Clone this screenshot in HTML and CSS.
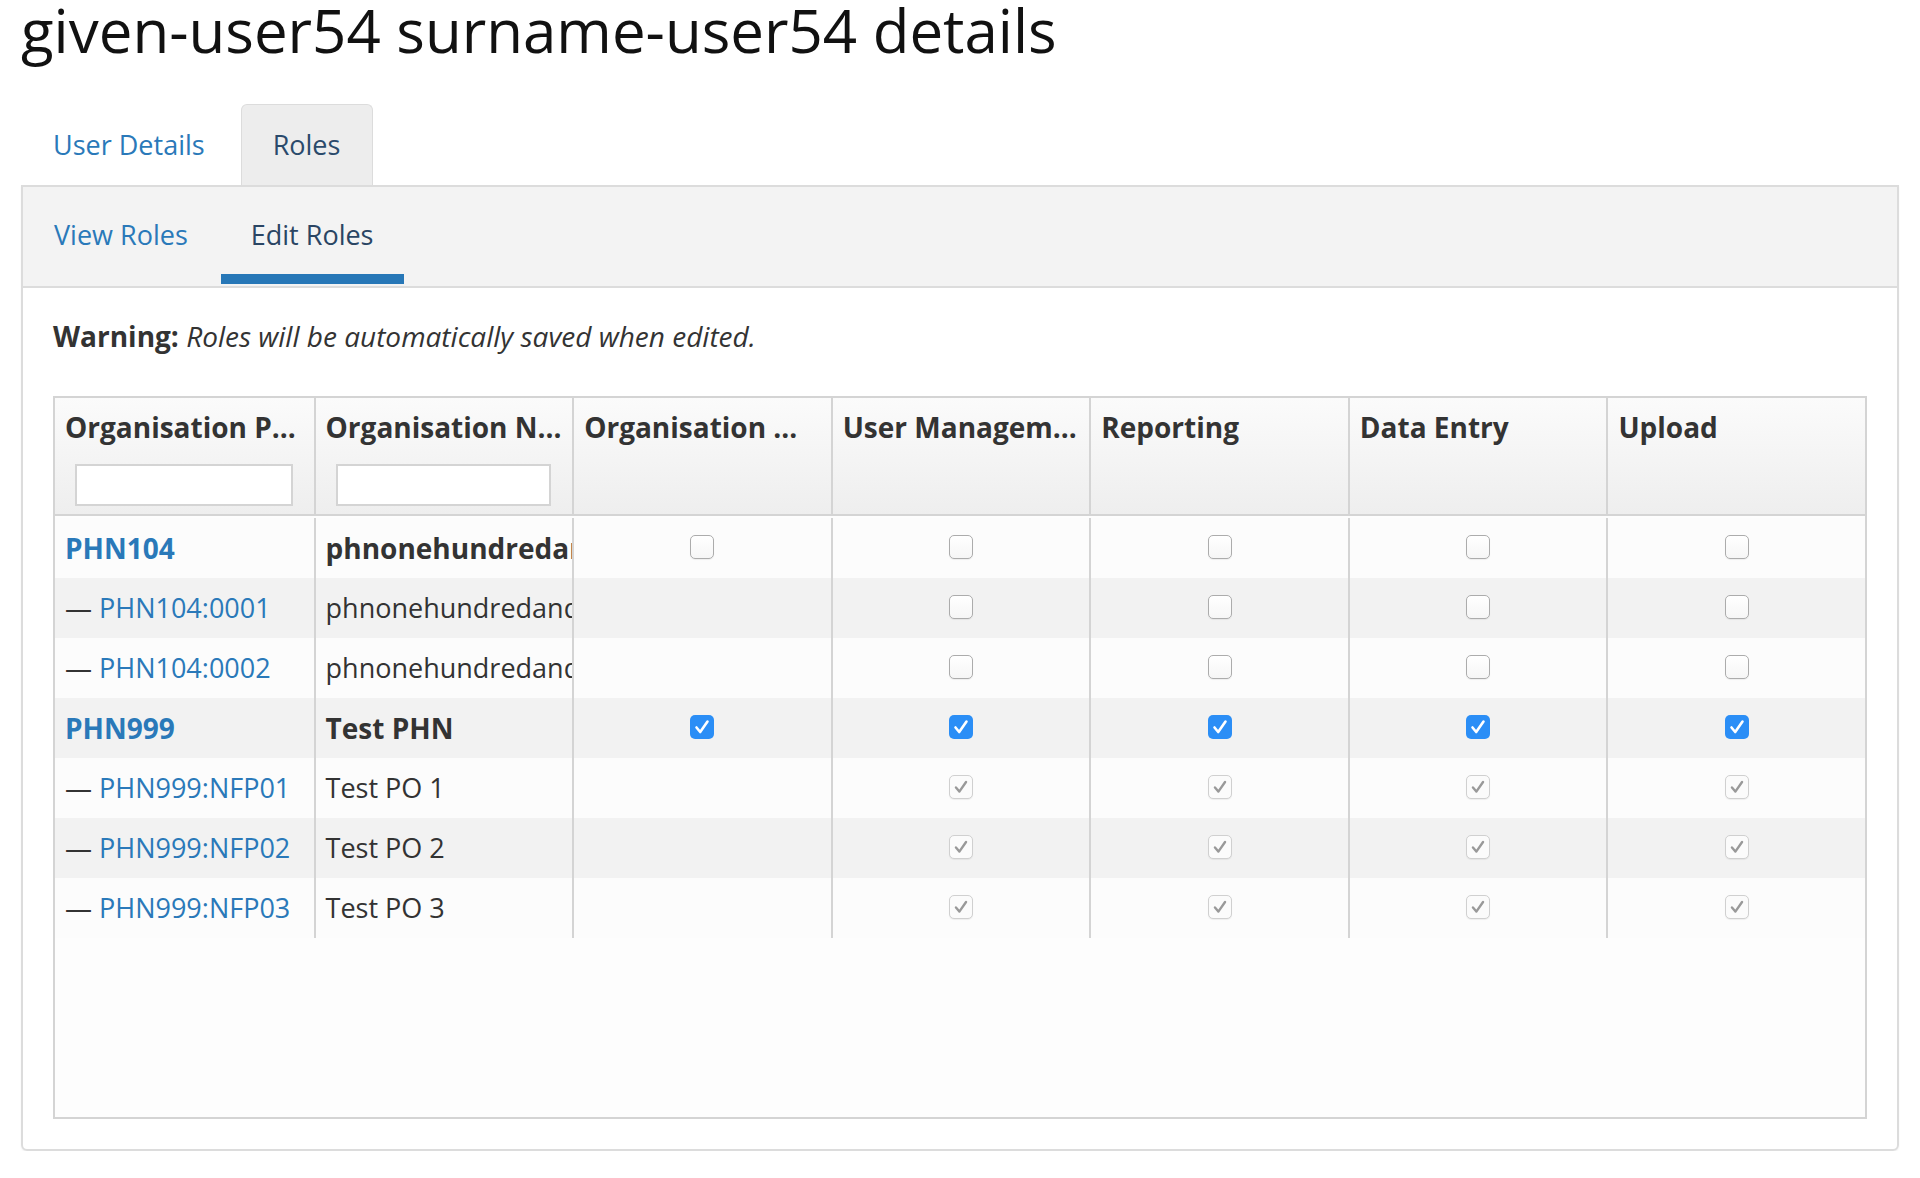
FILE: index.html
```html
<!DOCTYPE html>
<html lang="en">
<head>
<meta charset="utf-8">
<title>given-user54 surname-user54 details</title>
<link rel="stylesheet" href="styles.css">
</head>
<body>
<h1 class="title">given-user54 surname-user54 details</h1>
<nav class="tabs">
  <a class="tab">User Details</a>
  <a class="tab tab-active">Roles</a>
</nav>
<section class="panel">
  <nav class="subtabs">
    <a class="subtab">View Roles</a>
    <a class="subtab subtab-active">Edit Roles</a>
  </nav>
  <div class="content">
    <p class="warning"><strong>Warning:</strong> <em>Roles will be automatically saved when edited.</em></p>
    <div class="grid">
      <div class="grid-head">
        <div class="hcell"><div class="htext">Organisation P...</div><input class="filter" type="text"></div>
        <div class="hcell"><div class="htext">Organisation N...</div><input class="filter" type="text"></div>
        <div class="hcell"><div class="htext">Organisation ...</div></div>
        <div class="hcell"><div class="htext">User Managem...</div></div>
        <div class="hcell"><div class="htext">Reporting</div></div>
        <div class="hcell"><div class="htext">Data Entry</div></div>
        <div class="hcell"><div class="htext">Upload</div></div>
      </div>
      <div class="grid-body">
        <div class="row">
          <div class="cell"><a class="link strong">PHN104</a></div>
          <div class="cell strong">phnonehundredandfour</div>
          <div class="cell check-cell"><span class="cb"></span></div>
          <div class="cell check-cell"><span class="cb"></span></div>
          <div class="cell check-cell"><span class="cb"></span></div>
          <div class="cell check-cell"><span class="cb"></span></div>
          <div class="cell check-cell"><span class="cb"></span></div>
        </div>
        <div class="row">
          <div class="cell"><span class="dash">—</span> <a class="link">PHN104:0001</a></div>
          <div class="cell">phnonehundredandfour</div>
          <div class="cell check-cell"></div>
          <div class="cell check-cell"><span class="cb"></span></div>
          <div class="cell check-cell"><span class="cb"></span></div>
          <div class="cell check-cell"><span class="cb"></span></div>
          <div class="cell check-cell"><span class="cb"></span></div>
        </div>
        <div class="row">
          <div class="cell"><span class="dash">—</span> <a class="link">PHN104:0002</a></div>
          <div class="cell">phnonehundredandfour</div>
          <div class="cell check-cell"></div>
          <div class="cell check-cell"><span class="cb"></span></div>
          <div class="cell check-cell"><span class="cb"></span></div>
          <div class="cell check-cell"><span class="cb"></span></div>
          <div class="cell check-cell"><span class="cb"></span></div>
        </div>
        <div class="row">
          <div class="cell"><a class="link strong">PHN999</a></div>
          <div class="cell strong">Test PHN</div>
          <div class="cell check-cell"><span class="cb cb-on"><svg viewBox="0 0 24 24"><path d="M6.5 12.5 L10.2 17 L17.5 6.5"/></svg></span></div>
          <div class="cell check-cell"><span class="cb cb-on"><svg viewBox="0 0 24 24"><path d="M6.5 12.5 L10.2 17 L17.5 6.5"/></svg></span></div>
          <div class="cell check-cell"><span class="cb cb-on"><svg viewBox="0 0 24 24"><path d="M6.5 12.5 L10.2 17 L17.5 6.5"/></svg></span></div>
          <div class="cell check-cell"><span class="cb cb-on"><svg viewBox="0 0 24 24"><path d="M6.5 12.5 L10.2 17 L17.5 6.5"/></svg></span></div>
          <div class="cell check-cell"><span class="cb cb-on"><svg viewBox="0 0 24 24"><path d="M6.5 12.5 L10.2 17 L17.5 6.5"/></svg></span></div>
        </div>
        <div class="row">
          <div class="cell"><span class="dash">—</span> <a class="link">PHN999:NFP01</a></div>
          <div class="cell">Test PO 1</div>
          <div class="cell check-cell"></div>
          <div class="cell check-cell"><span class="cb cb-dis"><svg viewBox="0 0 24 24"><path d="M6.5 12.5 L10.2 17 L17.5 6.5"/></svg></span></div>
          <div class="cell check-cell"><span class="cb cb-dis"><svg viewBox="0 0 24 24"><path d="M6.5 12.5 L10.2 17 L17.5 6.5"/></svg></span></div>
          <div class="cell check-cell"><span class="cb cb-dis"><svg viewBox="0 0 24 24"><path d="M6.5 12.5 L10.2 17 L17.5 6.5"/></svg></span></div>
          <div class="cell check-cell"><span class="cb cb-dis"><svg viewBox="0 0 24 24"><path d="M6.5 12.5 L10.2 17 L17.5 6.5"/></svg></span></div>
        </div>
        <div class="row">
          <div class="cell"><span class="dash">—</span> <a class="link">PHN999:NFP02</a></div>
          <div class="cell">Test PO 2</div>
          <div class="cell check-cell"></div>
          <div class="cell check-cell"><span class="cb cb-dis"><svg viewBox="0 0 24 24"><path d="M6.5 12.5 L10.2 17 L17.5 6.5"/></svg></span></div>
          <div class="cell check-cell"><span class="cb cb-dis"><svg viewBox="0 0 24 24"><path d="M6.5 12.5 L10.2 17 L17.5 6.5"/></svg></span></div>
          <div class="cell check-cell"><span class="cb cb-dis"><svg viewBox="0 0 24 24"><path d="M6.5 12.5 L10.2 17 L17.5 6.5"/></svg></span></div>
          <div class="cell check-cell"><span class="cb cb-dis"><svg viewBox="0 0 24 24"><path d="M6.5 12.5 L10.2 17 L17.5 6.5"/></svg></span></div>
        </div>
        <div class="row">
          <div class="cell"><span class="dash">—</span> <a class="link">PHN999:NFP03</a></div>
          <div class="cell">Test PO 3</div>
          <div class="cell check-cell"></div>
          <div class="cell check-cell"><span class="cb cb-dis"><svg viewBox="0 0 24 24"><path d="M6.5 12.5 L10.2 17 L17.5 6.5"/></svg></span></div>
          <div class="cell check-cell"><span class="cb cb-dis"><svg viewBox="0 0 24 24"><path d="M6.5 12.5 L10.2 17 L17.5 6.5"/></svg></span></div>
          <div class="cell check-cell"><span class="cb cb-dis"><svg viewBox="0 0 24 24"><path d="M6.5 12.5 L10.2 17 L17.5 6.5"/></svg></span></div>
          <div class="cell check-cell"><span class="cb cb-dis"><svg viewBox="0 0 24 24"><path d="M6.5 12.5 L10.2 17 L17.5 6.5"/></svg></span></div>
        </div>
      </div>
    </div>
  </div>
</section>
</body>
</html>
```
FILE: styles.css
```css
* { box-sizing: border-box; }

body {
  margin: 0;
  padding: 0 21px;
  background: #ffffff;
  font-family: "Open Sans", "Liberation Sans", sans-serif;
  font-size: 28px;
  color: #333333;
}

.title {
  margin: 0 0 44px;
  font-size: 60px;
  line-height: 60px;
  font-weight: 400;
  color: #111111;
}

.tabs {
  display: flex;
  gap: 3px;
  height: 81px;
}

.tab {
  display: block;
  height: 81px;
  padding: 0 32px 0 31px;
  font-size: 27px;
  line-height: 79px;
  border: 1px solid transparent;
  border-bottom: 0;
  border-radius: 6px 6px 0 0;
  color: #2a79b9;
  cursor: pointer;
}

.tab-active {
  background: #ededed;
  border-color: #dcdcdc;
  color: #2a4a6b;
}

.panel {
  border: 2px solid #dcdcdc;
  border-radius: 0 0 6px 6px;
  box-shadow: 0 1px 2px rgba(0, 0, 0, 0.06);
}

.subtabs {
  display: flex;
  gap: 3px;
  padding-left: 1px;
  background: #f3f3f3;
  border-bottom: 2px solid #dcdcdc;
}

.subtab {
  display: block;
  padding: 28px 30px 19px;
  font-size: 27px;
  line-height: 40px;
  border-bottom: 10px solid transparent;
  margin-bottom: 2px;
  color: #2a79b9;
  cursor: pointer;
}

.subtab-active {
  border-bottom-color: #2777b7;
  color: #2a4563;
}

.content {
  padding: 28px 30px 30px;
}

.warning {
  margin: 0 0 40px;
  line-height: 40px;
}

.warning strong { font-weight: 700; }
.warning em { font-style: italic; }

.grid {
  height: 723px;
  border: 2px solid #d4d4d4;
  background: #fdfdfd;
}

.grid-head {
  display: grid;
  grid-template-columns: repeat(7, 1fr);
  border-bottom: 2px solid #d4d4d4;
  background: linear-gradient(#fbfbfb, #eeeeee);
}

.hcell {
  height: 116px;
  padding: 8px 10px;
  border-left: 2px solid #d4d4d4;
  overflow: hidden;
}

.hcell:first-child { border-left: 0; }

.htext {
  line-height: 42px;
  font-weight: 700;
  white-space: nowrap;
  overflow: hidden;
}

.filter {
  display: block;
  width: calc(100% - 21px);
  height: 42px;
  margin: 16px 0 0 10px;
  border: 2px solid #d4d4d4;
  background: #ffffff;
  font: inherit;
}

.grid-body {
  padding-top: 2px;
}

.row {
  display: grid;
  grid-template-columns: repeat(7, 1fr);
  height: 60px;
  background: #fcfcfc;
}

.row:nth-child(even) { background: #f2f2f2; }

.cell {
  padding: 0 10px;
  font-size: 27px;
  line-height: 60px;
  white-space: nowrap;
  overflow: hidden;
  border-left: 2px solid #d4d4d4;
}

.cell:first-child { border-left: 0; }

.strong { font-weight: 700; font-size: 28px; }

.link {
  color: #2a79b9;
  text-decoration: none;
}

.dash { color: #333333; }

.check-cell {
  display: flex;
  align-items: center;
  justify-content: center;
  padding-bottom: 3px;
}

.cb {
  display: block;
  width: 24px;
  height: 24px;
  border: 1.5px solid #acacac;
  border-radius: 5px;
  background: linear-gradient(#ffffff, #f6f6f6);
  box-shadow: 0 1px 1px rgba(0, 0, 0, 0.06);
}

.cb svg {
  display: block;
  width: 100%;
  height: 100%;
  fill: none;
  stroke-width: 2.6;
  stroke-linecap: round;
  stroke-linejoin: round;
}

.cb-on {
  border: 0;
  background: #2b8ef6;
  box-shadow: none;
}

.cb-on svg { stroke: #ffffff; }

.cb-dis {
  border-color: #d0d0d0;
  background: #fbfbfb;
}

.cb-dis svg { stroke: #999999; }
```
